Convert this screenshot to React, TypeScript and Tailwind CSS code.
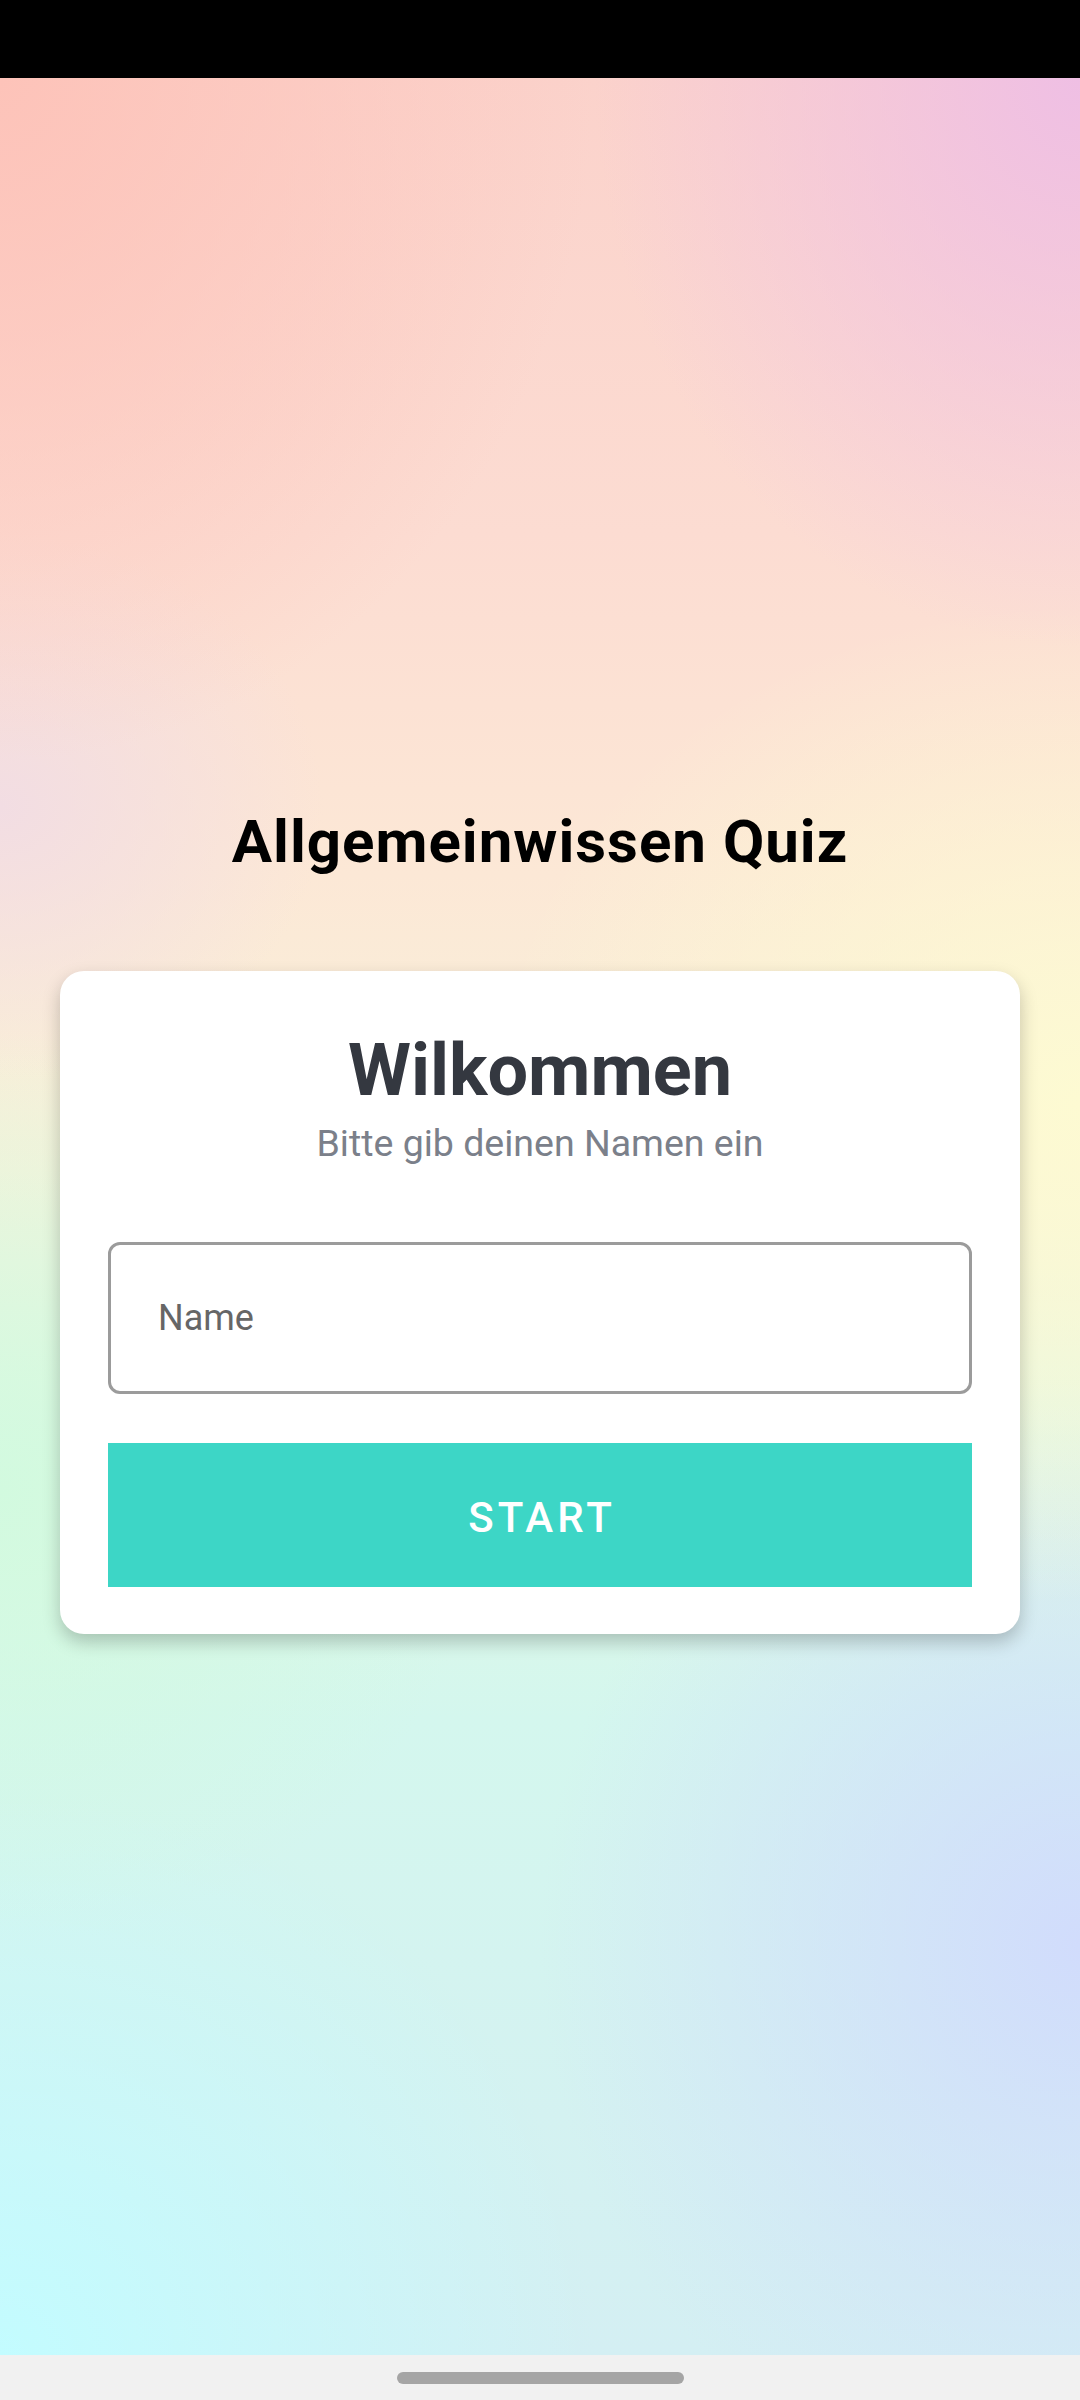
import { useState } from 'react';

export default function App() {
  const [name, setName] = useState('');

  return (
    <div className="w-[1080px] h-[2400px] flex flex-col font-['Roboto',_'Noto_Sans',_sans-serif]">
      {/* status bar */}
      <div className="h-[78px] bg-black shrink-0"></div>

      <main className="flex-1 flex flex-col items-center justify-center pt-[8px] bg-[radial-gradient(ellipse_55%_30%_at_0%_0%,#fdc3b9_0%,transparent_100%),radial-gradient(ellipse_45%_25%_at_100%_0%,#efbfe4_0%,transparent_100%),radial-gradient(ellipse_30%_12%_at_0%_32%,#f2dde3_0%,transparent_100%),radial-gradient(ellipse_55%_22%_at_100%_45%,#fdfad2_0%,transparent_100%),radial-gradient(ellipse_45%_20%_at_0%_62%,#d2fadf_0%,transparent_100%),radial-gradient(ellipse_50%_25%_at_100%_82%,#d1dcfc_0%,transparent_100%),radial-gradient(ellipse_55%_25%_at_0%_100%,#c3fcff_0%,transparent_100%),linear-gradient(180deg,#fbd2cb_0%,#fcdcd2_20%,#fce8d6_35%,#f7f2da_48%,#e2f8e4_60%,#d4f7ee_72%,#d4eff3_100%)]">
        <h1 className="text-[60px] leading-[70px] font-bold text-black text-center tracking-[1px]">
          Allgemeinwissen Quiz
        </h1>

        <div className="mt-[94px] w-[960px] bg-white rounded-[24px] shadow-[0_8px_18px_rgba(0,0,0,0.22)] px-[48px] pt-[58px] pb-[47px] flex flex-col">
          <h2 className="text-[72px] leading-[84px] font-bold text-[#343840] text-center">
            Wilkommen
          </h2>
          <p className="mt-[8px] text-[37.5px] leading-[45px] text-[#7b808a] text-center">
            Bitte gib deinen Namen ein
          </p>

          <input
            className="mt-[76px] h-[152px] w-full border-[3px] border-[#9b9b9b] rounded-[12px] px-[47px] text-[36px] text-[#333] placeholder:text-[#666] outline-none"
            placeholder="Name"
            value={name}
            onChange={(e) => setName(e.target.value)}
          />

          <button className="mt-[49px] h-[144px] w-full bg-[#3dd6c6] text-white text-[42px] font-medium tracking-[4px] pt-[5px] pl-[4px]">
            START
          </button>
        </div>
      </main>

      {/* navigation bar */}
      <div className="h-[45px] bg-[#f1f1f1] shrink-0 flex justify-center pt-[17px]">
        <div className="w-[287px] h-[12px] rounded-full bg-[#a5a5a5]"></div>
      </div>
    </div>
  );
}
